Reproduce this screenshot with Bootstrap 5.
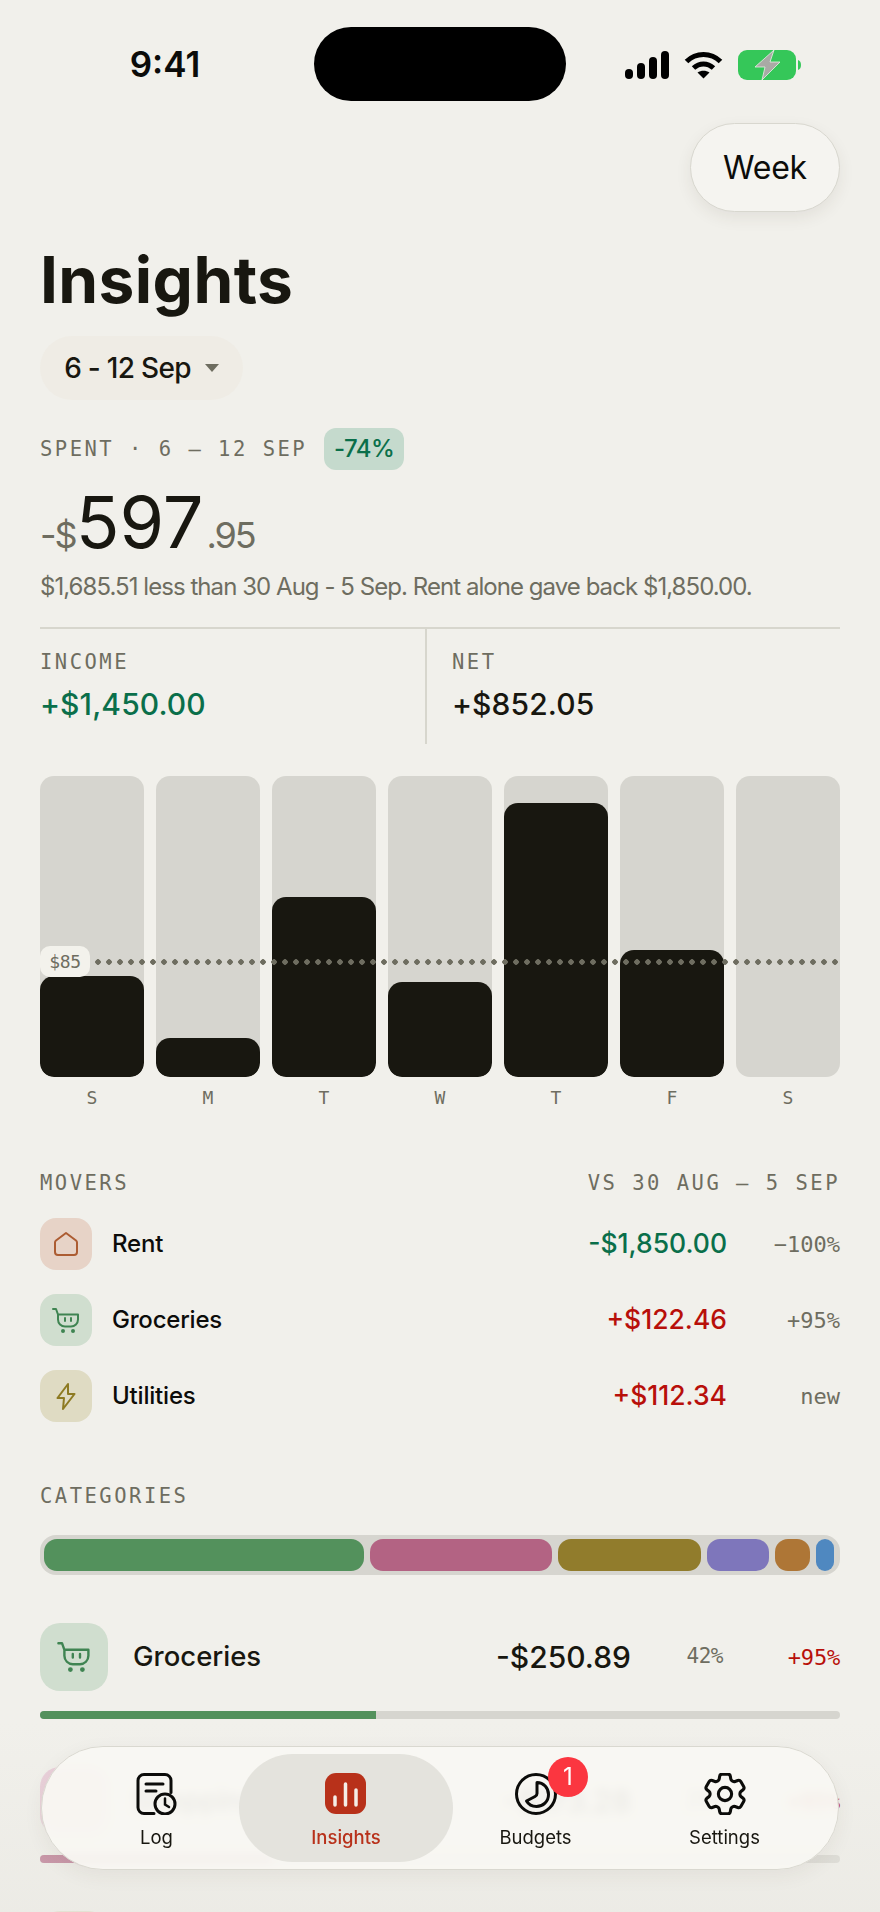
<!DOCTYPE html>
<html lang="en">
  <head>
    <meta charset="UTF-8" />
    <meta name="viewport" content="width=device-width, initial-scale=1.0" />
    <title>Insights</title>
    <link
      href="https://cdn.jsdelivr.net/npm/bootstrap@5.3.3/dist/css/bootstrap.min.css"
      rel="stylesheet"
    />
    <style>
      body {
        background-color: #f1f0eb;
        color: #181710;
        font-family: "Inter", "Liberation Sans", sans-serif;
      }

      .screen {
        position: relative;
        width: 880px;
        height: 1912px;
        overflow: hidden;
        background-color: #f1f0eb;
      }

      .page-body {
        padding: 0 40px;
      }

      .mono-label {
        font-family: "DejaVu Sans Mono", monospace;
        font-size: 20.5px;
        line-height: 24px;
        letter-spacing: 2.5px;
        color: #6e6d60;
      }

      /* status bar */
      .status-bar {
        padding-top: 27px;
        height: 101px;
      }
      .status-time {
        width: 314px;
        padding-left: 16px;
        text-align: center;
        font-size: 35px;
        font-weight: 600;
        color: #0c0c0a;
      }
      .island {
        width: 252px;
        height: 74px;
        background-color: #000;
      }
      .status-icons {
        padding-left: 59px;
        margin-top: 23px;
        gap: 15px;
      }

      .btn.week-btn {
        width: 150px;
        height: 89px;
        margin-top: 22px;
        border-radius: 45px;
        background-color: #f5f4f0;
        border: 1px solid #d8d7cf;
        box-shadow: 0 6px 16px rgba(60, 55, 40, 0.08);
        font-size: 32px;
        letter-spacing: -0.2px;
        color: #0c0c0a;
      }

      .page-title {
        margin: 32px 0 0;
        font-size: 64px;
        line-height: 72px;
        font-weight: 700;
        letter-spacing: 0.4px;
      }

      .range-pill {
        width: 203px;
        height: 64px;
        margin-top: 20px;
        gap: 14px;
        background-color: #efece5;
        font-size: 28px;
        font-weight: 500;
        letter-spacing: -0.7px;
      }
      .caret-down {
        width: 0;
        height: 0;
        border-left: 7px solid transparent;
        border-right: 7px solid transparent;
        border-top: 8px solid #6e6d60;
      }

      .spent-row {
        margin-top: 28px;
        gap: 17px;
      }
      .delta-chip {
        width: 80px;
        height: 42px;
        border-radius: 12px;
        background-color: #c5dacd;
        color: #0a6f4a;
        font-size: 24px;
        font-weight: 500;
        letter-spacing: -0.5px;
      }

      .amount-row {
        margin-top: 12px;
        height: 77px;
        line-height: 80px;
      }
      .amount-main {
        font-size: 72px;
        letter-spacing: 0;
      }
      .amount-side {
        font-size: 36px;
        letter-spacing: -2px;
        color: #6e6d60;
      }
      .amount-cents {
        margin-left: 3px;
      }

      .amount-note {
        margin-top: 11px;
        font-size: 24px;
        line-height: 34px;
        letter-spacing: -0.95px;
        color: #6e6d60;
      }

      .stat-row {
        margin-top: 23px;
        height: 117px;
        border-top: 2px solid #d7d6cd;
      }
      .stat-left {
        width: 387px;
        padding-top: 21px;
        border-right: 2px solid #d7d6cd;
      }
      .stat-right {
        padding: 21px 0 0 25px;
      }
      .stat-value {
        margin-top: 10px;
        font-size: 30px;
        line-height: 40px;
        font-weight: 500;
        letter-spacing: 0.1px;
      }
      .text-income {
        color: #0a6f4a;
      }
      .text-rise {
        color: #b80f0a;
      }

      /* weekly chart */
      .bar-chart {
        position: relative;
        margin-top: 32px;
        height: 301px;
        gap: 12px;
      }
      .bar-track {
        position: relative;
        flex: 1 1 0;
        border-radius: 14px;
        background-color: #d6d5cf;
        overflow: hidden;
      }
      .bar-fill {
        position: absolute;
        left: 0;
        right: 0;
        bottom: 0;
        border-radius: 14px;
        background-color: #181710;
      }
      .avg-line {
        position: absolute;
        left: 55px;
        right: 0;
        top: 183px;
        height: 6px;
        background-image: radial-gradient(circle at 3px 3px, #6e6d60 2.5px, transparent 3px);
        background-size: 11px 6px;
      }
      .avg-tag {
        position: absolute;
        left: 0;
        top: 170px;
        width: 50px;
        height: 31px;
        border-radius: 10px;
        background-color: #f3f2ec;
        font-family: "DejaVu Sans Mono", monospace;
        font-size: 18px;
        letter-spacing: -0.4px;
        color: #6e6d60;
      }
      .day-row {
        margin-top: 9px;
        gap: 12px;
      }
      .day-row span {
        flex: 1 1 0;
        text-align: center;
        font-family: "DejaVu Sans Mono", monospace;
        font-size: 18px;
        line-height: 24px;
        color: #6e6d60;
      }

      /* movers */
      .movers-head {
        margin-top: 61px;
      }
      .mover-row {
        height: 52px;
        margin-top: 24px;
      }
      .movers-head + .mover-row {
        margin-top: 23px;
      }
      .tile {
        flex: 0 0 auto;
        width: 52px;
        height: 52px;
        border-radius: 16px;
      }
      .tile-rent {
        background-color: #e7d3c7;
      }
      .tile-food {
        background-color: #d0decf;
      }
      .tile-power {
        background-color: #dfdbc3;
      }
      .tile-shop {
        background-color: #e9ccd8;
      }
      .mover-name {
        margin-left: 20px;
        font-size: 24px;
        font-weight: 500;
        letter-spacing: -0.2px;
        color: #0c0c0a;
      }
      .mover-amount {
        margin-left: auto;
        font-size: 26.5px;
        font-weight: 500;
      }
      .mover-pct {
        width: 113px;
        text-align: right;
        font-family: "DejaVu Sans Mono", monospace;
        font-size: 22px;
        color: #6e6d60;
      }

      /* categories */
      .cat-head {
        margin-top: 62px;
      }
      .cat-stack {
        margin-top: 27px;
        height: 40px;
        padding: 4px;
        gap: 6px;
        border-radius: 16px;
        background-color: #d6d5cf;
      }
      .cat-stack span {
        border-radius: 13px;
      }
      .cat-row {
        height: 68px;
        margin-top: 48px;
      }
      .cat-tile {
        width: 68px;
        height: 68px;
        border-radius: 20px;
      }
      .cat-name {
        margin-left: 25px;
        font-size: 27.5px;
        font-weight: 500;
      }
      .cat-amount {
        margin-left: auto;
        font-size: 30px;
        font-weight: 500;
      }
      .cat-share {
        width: 92px;
        text-align: right;
        font-family: "DejaVu Sans Mono", monospace;
        font-size: 21px;
        letter-spacing: -0.5px;
        color: #6e6d60;
      }
      .cat-delta {
        width: 117px;
        text-align: right;
        font-family: "DejaVu Sans Mono", monospace;
        font-size: 22px;
        letter-spacing: -0.2px;
      }
      .progress.cat-progress {
        height: 8px;
        margin-top: 20px;
        border-radius: 4px;
        background-color: #d6d5cf;
      }
      .fill-green {
        background-color: #53915c;
      }
      .fill-pink {
        background-color: #b36383;
      }
      .fill-olive {
        background-color: #917c2c;
      }
      .fill-purple {
        background-color: #7e76bb;
      }
      .fill-orange {
        background-color: #ae7636;
      }
      .fill-blue {
        background-color: #4f88c0;
      }

      /* floating tab bar */
      .bottom-fade {
        position: absolute;
        left: 0;
        right: 0;
        bottom: 0;
        height: 190px;
        background: linear-gradient(to bottom, rgba(232, 231, 225, 0), rgba(232, 231, 225, 0.55));
      }
      .tab-bar {
        position: absolute;
        left: 41px;
        top: 1746px;
        width: 798px;
        height: 124px;
        padding: 7px 0;
        border-radius: 62px;
        background-color: rgba(248, 247, 243, 0.92);
        border: 1px solid #d9d8d0;
        backdrop-filter: blur(5px);
        box-shadow: 0 6px 20px rgba(60, 55, 40, 0.06);
      }
      .tab-item {
        position: relative;
        width: 189px;
        height: 108px;
        padding-top: 19px;
        border-radius: 54px;
        font-size: 18.5px;
        line-height: 24px;
        color: #181710;
        text-decoration: none;
      }
      .tab-item svg {
        display: block;
        height: 42px;
        margin-bottom: 10px;
      }
      .tab-log {
        margin-left: 20px;
      }
      .tab-active {
        width: 214px;
        margin: 0 -12px;
        background-color: #e4e3dd;
        color: #b8311a;
        font-weight: 500;
      }
      .tab-count {
        position: absolute;
        left: 107px;
        top: 3px;
        width: 40px;
        height: 40px;
        background-color: #fb3640;
        color: #fff;
        font-size: 24px;
      }
    </style>
  </head>
  <body>
    <div class="screen">
      <div class="status-bar d-flex align-items-start">
        <div class="status-time lh-1 mt-3 pt-1">9:41</div>
        <div class="island rounded-pill"></div>
        <div class="status-icons d-flex align-items-center">
          <svg width="44" height="28" viewBox="0 0 44 28" fill="#000">
            <rect x="0" y="18" width="8" height="10" rx="4" />
            <rect x="12" y="12" width="8" height="16" rx="4" />
            <rect x="24" y="6" width="8" height="22" rx="4" />
            <rect x="36" y="0" width="8" height="28" rx="4" />
          </svg>
          <svg width="39" height="28" viewBox="0 0 39 28" fill="none" stroke="#000" stroke-width="5">
            <path d="M2.5 10.5C12 1 27 1 36.5 10.5" />
            <path d="M9.5 17c6-5.500 14-5.500 20 0" />
            <path d="M19.5 27.5l-6-6c3.500-2.500 8.500-2.500 12 0z" fill="#000" stroke="none" />
          </svg>
          <svg width="63" height="30" viewBox="0 0 63 30">
            <rect x="0" y="0" width="58" height="30" rx="9" fill="#35c759" />
            <path d="M60 10c2 .5 3 2.500 3 5s-1 4.500-3 5z" fill="#35c759" />
            <path d="M36 0L17 17h10l-3 13 18-18H32z" fill="#a9aaa5" stroke="#e8f0e6" stroke-width=".8" />
          </svg>
        </div>
      </div>

      <div class="page-body">
        <div class="d-flex justify-content-end">
          <button type="button" class="btn week-btn p-0">Week</button>
        </div>

        <h1 class="page-title">Insights</h1>

        <div class="range-pill rounded-pill d-flex align-items-center justify-content-center">
          <span>6 - 12 Sep</span>
          <span class="caret-down"></span>
        </div>

        <div class="spent-row d-flex align-items-center">
          <span class="mono-label">SPENT · 6 – 12 SEP</span>
          <span class="delta-chip d-flex align-items-center justify-content-center">-74%</span>
        </div>

        <div class="amount-row d-flex align-items-baseline">
          <span class="amount-side">-$</span>
          <span class="amount-main">597</span>
          <span class="amount-side amount-cents">.95</span>
        </div>

        <p class="amount-note mb-0">$1,685.51 less than 30 Aug - 5 Sep. Rent alone gave back $1,850.00.</p>

        <div class="stat-row d-flex">
          <div class="stat-left">
            <div class="mono-label">INCOME</div>
            <div class="stat-value text-income">+$1,450.00</div>
          </div>
          <div class="stat-right">
            <div class="mono-label">NET</div>
            <div class="stat-value">+$852.05</div>
          </div>
        </div>

        <div class="bar-chart d-flex">
          <div class="bar-track"><div class="bar-fill" style="height: 101px"></div></div>
          <div class="bar-track"><div class="bar-fill" style="height: 39px"></div></div>
          <div class="bar-track"><div class="bar-fill" style="height: 180px"></div></div>
          <div class="bar-track"><div class="bar-fill" style="height: 95px"></div></div>
          <div class="bar-track"><div class="bar-fill" style="height: 274px"></div></div>
          <div class="bar-track"><div class="bar-fill" style="height: 127px"></div></div>
          <div class="bar-track"></div>
          <div class="avg-line"></div>
          <div class="avg-tag d-flex align-items-center justify-content-center">$85</div>
        </div>
        <div class="day-row d-flex">
          <span>S</span><span>M</span><span>T</span><span>W</span><span>T</span><span>F</span><span>S</span>
        </div>

        <div class="movers-head d-flex justify-content-between">
          <span class="mono-label">MOVERS</span>
          <span class="mono-label">VS 30 AUG – 5 SEP</span>
        </div>
        <div class="mover-row d-flex align-items-center">
          <div class="tile tile-rent d-flex align-items-center justify-content-center">
            <svg width="26" height="26" viewBox="0 0 26 26" fill="none" stroke="#ac5c32" stroke-width="2">
              <path d="M13 2l10 7.500c.6.500 1 1 1 2V21a3 3 0 0 1-3 3H5a3 3 0 0 1-3-3V11.500c0-1 .4-1.500 1-2z" stroke-linejoin="round" />
            </svg>
          </div>
          <span class="mover-name">Rent</span>
          <span class="mover-amount text-income">-$1,850.00</span>
          <span class="mover-pct">−100%</span>
        </div>
        <div class="mover-row d-flex align-items-center">
          <div class="tile tile-food d-flex align-items-center justify-content-center">
            <svg width="28" height="25" viewBox="0 0 28 25" fill="none" stroke="#3f8452" stroke-width="2" stroke-linecap="round" stroke-linejoin="round">
              <path d="M1 1h3l2 5.500h20v5a7 7 0 0 1-7 7h-6a7 7 0 0 1-7-7V6.500" />
              <path d="M13 10v3M19 10v3" />
              <circle cx="11" cy="23" r="1" fill="#3f8452" />
              <circle cx="21" cy="23" r="1" fill="#3f8452" />
            </svg>
          </div>
          <span class="mover-name">Groceries</span>
          <span class="mover-amount text-rise">+$122.46</span>
          <span class="mover-pct">+95%</span>
        </div>
        <div class="mover-row d-flex align-items-center">
          <div class="tile tile-power d-flex align-items-center justify-content-center">
            <svg width="20" height="27" viewBox="0 0 20 27" fill="none" stroke="#8d7a22" stroke-width="2" stroke-linejoin="round">
              <path d="M12 1L1.500 15H8l-1 11 11.500-15H12z" />
            </svg>
          </div>
          <span class="mover-name">Utilities</span>
          <span class="mover-amount text-rise">+$112.34</span>
          <span class="mover-pct">new</span>
        </div>

        <div class="cat-head mono-label">CATEGORIES</div>
        <div class="cat-stack d-flex">
          <span class="fill-green" style="width: 320px"></span>
          <span class="fill-pink" style="width: 182px"></span>
          <span class="fill-olive" style="width: 143px"></span>
          <span class="fill-purple" style="width: 62px"></span>
          <span class="fill-orange" style="width: 35px"></span>
          <span class="fill-blue" style="width: 18px"></span>
        </div>

        <div class="cat-row d-flex align-items-center">
          <div class="tile cat-tile tile-food d-flex align-items-center justify-content-center">
            <svg width="34" height="30" viewBox="0 0 28 25" fill="none" stroke="#3f8452" stroke-width="2" stroke-linecap="round" stroke-linejoin="round">
              <path d="M1 1h3l2 5.500h20v5a7 7 0 0 1-7 7h-6a7 7 0 0 1-7-7V6.500" />
              <path d="M13 10v3M19 10v3" />
              <circle cx="11" cy="23" r="1" fill="#3f8452" />
              <circle cx="21" cy="23" r="1" fill="#3f8452" />
            </svg>
          </div>
          <span class="cat-name">Groceries</span>
          <span class="cat-amount">-$250.89</span>
          <span class="cat-share">42%</span>
          <span class="cat-delta text-rise">+95%</span>
        </div>
        <div class="progress cat-progress">
          <div class="progress-bar fill-green" style="width: 42%"></div>
        </div>

        <div class="cat-row d-flex align-items-center">
          <div class="tile cat-tile tile-shop"></div>
          <span class="cat-name">Shopping</span>
          <span class="cat-amount">-$173.28</span>
          <span class="cat-share">29%</span>
          <span class="cat-delta text-rise">+95%</span>
        </div>
        <div class="progress cat-progress">
          <div class="progress-bar fill-pink" style="width: 29%"></div>
        </div>

        <div class="cat-row d-flex align-items-center">
          <div class="tile cat-tile tile-power"></div>
        </div>
      </div>

      <div class="bottom-fade"></div>

      <nav class="tab-bar d-flex">
        <a class="tab-item tab-log d-flex flex-column align-items-center" href="#">
          <svg width="42" height="42" viewBox="0 0 42 42" fill="none" stroke="#0c0c0a" stroke-width="3" stroke-linecap="round">
            <path d="M18 40.500H8a6 6 0 0 1-6-6v-27a6 6 0 0 1 6-6h21a6 6 0 0 1 6 6v12" />
            <path d="M10 11h17M10 18h10" />
            <circle cx="29" cy="31" r="10" />
            <path d="M29 25.500V31.500l4 2.500" stroke-width="2.500" />
          </svg>
          <span>Log</span>
        </a>
        <a class="tab-item tab-active d-flex flex-column align-items-center" href="#">
          <svg width="42" height="42" viewBox="0 0 42 42">
            <rect width="41" height="41" rx="11" fill="#b8311a" />
            <g stroke="#f5ede8" stroke-width="3.500" stroke-linecap="round">
              <path d="M10 24v8M20.500 11v21M31 17v15" />
            </g>
          </svg>
          <span>Insights</span>
        </a>
        <a class="tab-item d-flex flex-column align-items-center" href="#">
          <svg width="42" height="42" viewBox="0 0 42 42" fill="none" stroke="#0c0c0a" stroke-width="3">
            <circle cx="21" cy="21" r="19.500" />
            <path d="M22 9.500C28.500 9.500 33.500 15 33.500 21.500 33.500 28.500 28 33.500 21.500 33.500 17 33.500 13.500 31.500 11.500 28L20 23.500C21.500 22.700 22 22 22 20.500Z" stroke-linejoin="round" />
          </svg>
          <span>Budgets</span>
          <span class="tab-count rounded-circle d-flex align-items-center justify-content-center">1</span>
        </a>
        <a class="tab-item d-flex flex-column align-items-center" href="#">
          <svg width="44" height="42" viewBox="2.500 2.500 19 19" fill="none" stroke="#0c0c0a" stroke-width="1.400">
            <path d="M9.594 3.940c.09-.542.56-.94 1.110-.94h2.593c.55 0 1.020.398 1.110.94l.213 1.281c.063.374.313.686.645.870.074.040.147.083.22.127.325.196.72.257 1.075.124l1.217-.456a1.125 1.125 0 0 1 1.370.49l1.296 2.247a1.125 1.125 0 0 1-.26 1.431l-1.003.827c-.293.241-.438.613-.43.992a7.723 7.723 0 0 1 0 .255c-.008.378.137.75.43.991l1.004.827c.424.35.534.955.26 1.430l-1.298 2.247a1.125 1.125 0 0 1-1.369.491l-1.217-.456c-.355-.133-.75-.072-1.076.124a6.470 6.470 0 0 1-.22.128c-.331.183-.581.495-.644.869l-.213 1.281c-.09.543-.56.94-1.110.94h-2.594c-.55 0-1.019-.398-1.110-.94l-.213-1.281c-.062-.374-.312-.686-.644-.87a6.520 6.520 0 0 1-.22-.127c-.325-.196-.72-.257-1.076-.124l-1.217.456a1.125 1.125 0 0 1-1.369-.49l-1.297-2.247a1.125 1.125 0 0 1 .26-1.431l1.004-.827c.292-.24.437-.613.43-.991a6.932 6.932 0 0 1 0-.255c.007-.38-.138-.751-.43-.992l-1.004-.827a1.125 1.125 0 0 1-.26-1.430l1.297-2.247a1.125 1.125 0 0 1 1.370-.491l1.216.456c.356.133.751.072 1.076-.124.072-.044.146-.086.22-.128.332-.183.582-.495.644-.869l.214-1.280z" />
            <circle cx="12" cy="12" r="3" />
          </svg>
          <span>Settings</span>
        </a>
      </nav>
    </div>
    <script src="https://cdn.jsdelivr.net/npm/bootstrap@5.3.3/dist/js/bootstrap.bundle.min.js"></script>
  </body>
</html>
